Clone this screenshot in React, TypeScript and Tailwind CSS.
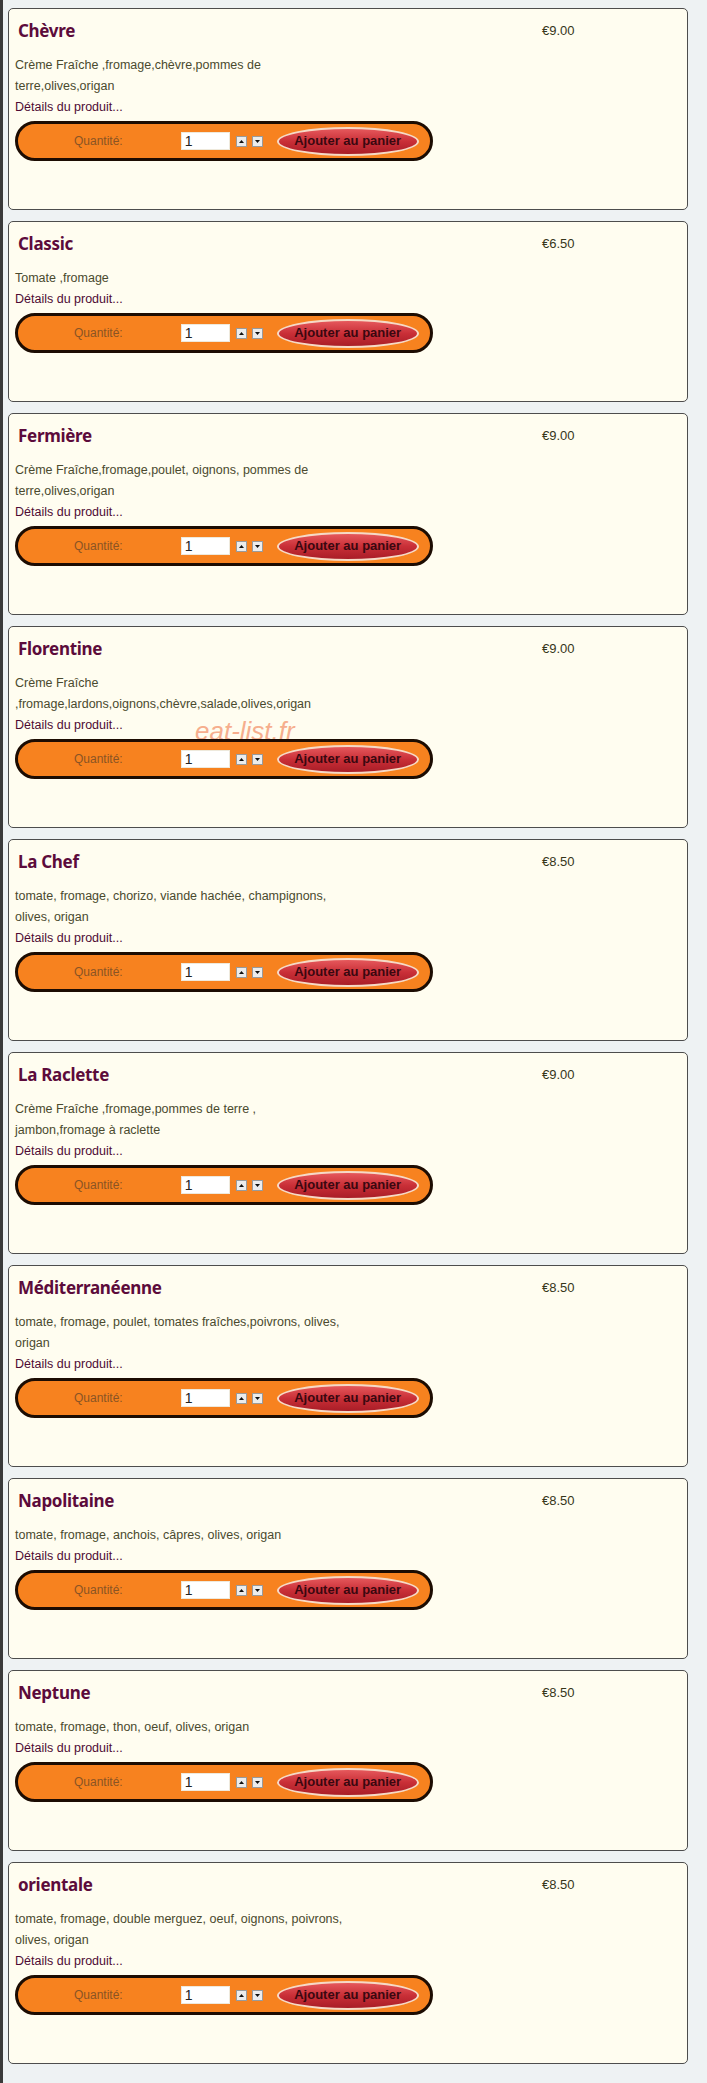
import React from "react"

type Pizza = {
  name: string
  price: string
  lines: string[]
  mark?: boolean
}

const pizzas: Pizza[] = [
  { name: "Chèvre", price: "€9.00", lines: ["Crème Fraîche ,fromage,chèvre,pommes de", "terre,olives,origan"] },
  { name: "Classic", price: "€6.50", lines: ["Tomate ,fromage"] },
  { name: "Fermière", price: "€9.00", lines: ["Crème Fraîche,fromage,poulet, oignons, pommes de", "terre,olives,origan"] },
  { name: "Florentine", price: "€9.00", lines: ["Crème Fraîche", ",fromage,lardons,oignons,chèvre,salade,olives,origan"], mark: true },
  { name: "La Chef", price: "€8.50", lines: ["tomate, fromage, chorizo, viande hachée, champignons,", "olives, origan"] },
  { name: "La Raclette", price: "€9.00", lines: ["Crème Fraîche ,fromage,pommes de terre ,", "jambon,fromage à raclette"] },
  { name: "Méditerranéenne", price: "€8.50", lines: ["tomate, fromage, poulet, tomates fraîches,poivrons, olives,", "origan"] },
  { name: "Napolitaine", price: "€8.50", lines: ["tomate, fromage, anchois, câpres, olives, origan"] },
  { name: "Neptune", price: "€8.50", lines: ["tomate, fromage, thon, oeuf, olives, origan"] },
  { name: "orientale", price: "€8.50", lines: ["tomate, fromage, double merguez, oeuf, oignons, poivrons,", "olives, origan"] },
]

function Spin({ up }: { up?: boolean }) {
  return (
    <span className="flex h-[11px] w-[11px] items-center justify-center border border-[#9a9a9a] bg-[#ececec]">
      <svg width="5" height="3" viewBox="0 0 5 3">
        {up ? <polygon points="2.5,0 5,3 0,3" fill="#111" /> : <polygon points="0,0 5,0 2.5,3" fill="#111" />}
      </svg>
    </span>
  )
}

function CartBar() {
  return (
    <div className="relative z-10 mt-[3px] flex h-[40px] w-[418px] items-center rounded-full border-[3px] border-[#1c0c02] bg-[#f7821f]">
      <span className="ml-[56px] text-[12px] text-[#8a5424]">Quantité:</span>
      <span className="ml-[58px] flex h-[18px] w-[49px] items-center border border-[#eee9dc] bg-white pl-[3px] text-[14px] text-[#222]">
        1
      </span>
      <span className="ml-[6px] flex gap-[5px]">
        <Spin up />
        <Spin />
      </span>
      <button className="ml-[14px] flex h-[29px] w-[142px] items-center justify-center rounded-[50%] border-2 border-[#f6dac6] bg-[linear-gradient(to_bottom,#e5585c,#c92f37_50%,#a91d27)] text-[13px] font-bold text-[#3a0810]">
        Ajouter au panier
      </button>
    </div>
  )
}

function PizzaCard({ p }: { p: Pizza }) {
  return (
    <section className="relative w-[680px] rounded-[5px] border border-[#4d4d4d] bg-[#fffdf0] pb-[48px] pl-[6px] pt-[10px]">
      {p.mark && (
        <span className="absolute left-[186px] top-[91px] text-[26px] italic leading-none text-[#f4946c] opacity-75">
          eat-list.fr
        </span>
      )}
      <div className="flex h-[24px] items-center">
        <h2 className="w-[527px] pl-[3px] font-['Noto_Sans',sans-serif] text-[17px] font-bold tracking-[-0.3px] text-[#5c0b3b]">
          {p.name}
        </h2>
        <span className="text-[13px] text-[#36361a]">{p.price}</span>
      </div>
      <div className="mt-[12px] text-[12.5px] leading-[21px] text-[#4a4a2e]">
        {p.lines.map((l) => (
          <div key={l}>{l}</div>
        ))}
      </div>
      <div className="text-[12.5px] leading-[21px] text-[#4e0b34]">Détails du produit...</div>
      <CartBar />
    </section>
  )
}

export default function App() {
  return (
    <div className="flex min-h-[2083px] w-[707px] bg-[#eef2f3] font-['Liberation_Sans',Arial,sans-serif]">
      <div className="w-[3px] shrink-0 bg-[#3a3a3a]" />
      <main className="flex flex-col gap-[11px] pl-[5px] pt-[8px]">
        {pizzas.map((p) => (
          <PizzaCard key={p.name} p={p} />
        ))}
      </main>
    </div>
  )
}
